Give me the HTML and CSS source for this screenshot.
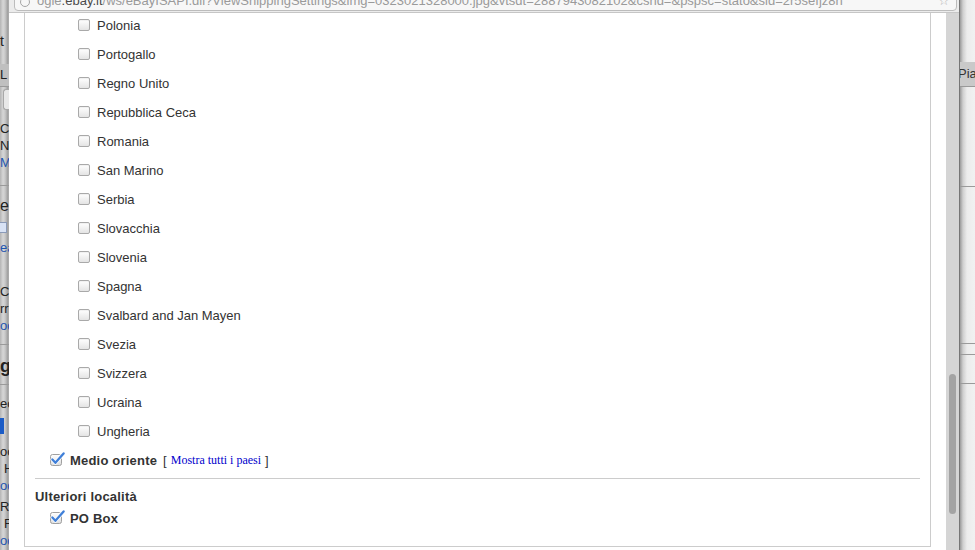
FILE: index.html
```html
<!DOCTYPE html>
<html lang="it">
<head>
<meta charset="utf-8">
<title>Impostazioni di spedizione</title>
<link rel="stylesheet" href="styles.css">
</head>
<body>
<div class="desk">
	<div class="behind behind-l">
		<p class="frag frag-t">t</p>
		<p class="frag tab-l">L</p>
		<div class="fake-input"></div>
		<p class="frag mt10">C</p>
		<p class="frag">N</p>
		<p class="frag link">M</p>
		<hr class="rule mt14">
		<p class="frag big mt10">es</p>
		<span class="chk-mini"></span>
		<p class="frag link mt6">ea</p>
		<p class="frag mt27">C</p>
		<p class="frag">rr</p>
		<p class="frag link">od</p>
		<hr class="rule mt10">
		<p class="frag head">g</p>
		<hr class="rule mt5">
		<p class="frag mt10">ec</p>
		<div class="btn-blue"></div>
		<p class="frag mt9">oc</p>
		<p class="frag indent">H</p>
		<p class="frag link">od</p>
		<p class="frag mt4">Re</p>
		<p class="frag indent">F</p>
		<p class="frag link">od</p>
	</div>

	<div class="popup">
		<div class="urlbar">
			<div class="urlbox">
				<span class="site-ico"></span>
				<span class="url">ogle<b>.ebay.it</b>/ws/eBayISAPI.dll?ViewShippingSettings&amp;img=0323021328000.jpg&amp;vtsdt=2887943082102&amp;cshd=&amp;pspsc=stato&amp;sid=2r5sefjz8h</span>
				<span class="star">☆</span>
			</div>
		</div>
		<div class="pbody">
			<div class="viewport">
				<div class="box">
					<ul class="countries">
						<li><input type="checkbox" class="cb"><span>Polonia</span></li>
						<li><input type="checkbox" class="cb"><span>Portogallo</span></li>
						<li><input type="checkbox" class="cb"><span>Regno Unito</span></li>
						<li><input type="checkbox" class="cb"><span>Repubblica Ceca</span></li>
						<li><input type="checkbox" class="cb"><span>Romania</span></li>
						<li><input type="checkbox" class="cb"><span>San Marino</span></li>
						<li><input type="checkbox" class="cb"><span>Serbia</span></li>
						<li><input type="checkbox" class="cb"><span>Slovacchia</span></li>
						<li><input type="checkbox" class="cb"><span>Slovenia</span></li>
						<li><input type="checkbox" class="cb"><span>Spagna</span></li>
						<li><input type="checkbox" class="cb"><span>Svalbard and Jan Mayen</span></li>
						<li><input type="checkbox" class="cb"><span>Svezia</span></li>
						<li><input type="checkbox" class="cb"><span>Svizzera</span></li>
						<li><input type="checkbox" class="cb"><span>Ucraina</span></li>
						<li><input type="checkbox" class="cb"><span>Ungheria</span></li>
					</ul>
					<div class="region">
						<svg class="tick" viewBox="0 0 15 14" width="15" height="14">
							<defs>
								<linearGradient id="tg1" x1="0" y1="0" x2="0" y2="1">
									<stop offset="0" stop-color="#ffffff"/>
									<stop offset="1" stop-color="#dcdcdc"/>
								</linearGradient>
							</defs>
							<rect x="0.5" y="2.5" width="11" height="11" rx="2" fill="url(#tg1)" stroke="#a0a0a0"/>
							<path d="M2.4 7.4 L5.4 10.8 L13.6 1.4" fill="none" stroke="#fff" stroke-width="3.8" stroke-linecap="round" stroke-linejoin="round"/>
							<path d="M2.4 7.4 L5.4 10.8 L13.6 1.4" fill="none" stroke="#3f7fd8" stroke-width="2.3" stroke-linecap="round" stroke-linejoin="round"/>
						</svg>
						<span>Medio oriente</span>
						<span class="bracket">[</span><a class="more" href="#">Mostra tutti i paesi</a><span class="bracket bracket-r">]</span>
					</div>
					<hr class="sep">
					<div class="group">Ulteriori località</div>
					<div class="region po">
						<svg class="tick" viewBox="0 0 15 14" width="15" height="14">
							<defs>
								<linearGradient id="tg2" x1="0" y1="0" x2="0" y2="1">
									<stop offset="0" stop-color="#ffffff"/>
									<stop offset="1" stop-color="#dcdcdc"/>
								</linearGradient>
							</defs>
							<rect x="0.5" y="2.5" width="11" height="11" rx="2" fill="url(#tg2)" stroke="#a0a0a0"/>
							<path d="M2.4 7.4 L5.4 10.8 L13.6 1.4" fill="none" stroke="#fff" stroke-width="3.8" stroke-linecap="round" stroke-linejoin="round"/>
							<path d="M2.4 7.4 L5.4 10.8 L13.6 1.4" fill="none" stroke="#3f7fd8" stroke-width="2.3" stroke-linecap="round" stroke-linejoin="round"/>
						</svg>
						<span>PO Box</span>
					</div>
				</div>
			</div>
			<div class="vscroll"><div class="thumb"></div></div>
		</div>
	</div>

	<div class="behind behind-r">
		<p class="tab-r">Pia</p>
		<hr class="rule mt99">
		<hr class="rule mt156">
		<hr class="rule mt10">
		<hr class="rule mt28">
	</div>
</div>
</body>
</html>
```

FILE: styles.css
```css
*{ padding:0; margin:0; box-sizing:content-box;}
body{ background:#ddd; font-family:"Liberation Sans", Arial, sans-serif; overflow:hidden;}
.desk{ display:flex; height:550px; overflow:hidden;}

/* page behind the popup */
.behind{ flex:none; overflow:hidden; white-space:nowrap; font-size:13px; color:#222;}
.behind-l{ width:9px; background:linear-gradient(to right, #b4b4b4 0, #d6d6d6 3px, #c9c9c9 5px, #9c9c9c 8px, #b8b8b8 9px);}
.behind-r{ width:15px; border-left:1px solid #767676; background:linear-gradient(to right, #9a9a9a 0, #cfcfcf 3px, #ececec 7px, #f1f1f1 15px);}
.frag{ line-height:17px; height:17px;}
.frag-t{ margin-top:32px; font-size:14px; line-height:18px; height:18px;}
.tab-l{ margin-top:14px; height:22px; line-height:22px; background:#bfbfbf; border-bottom:1px solid #999;}
.fake-input{ margin:2px 0 0 3px; height:19px; border:1px solid #a8a8a8; border-right:0; border-radius:3px 0 0 3px; background:#e8e8e8;}
.link{ color:#1f55b0;}
.big{ font-size:16px; line-height:20px; height:20px;}
.head{ margin-top:8px; font-size:18px; font-weight:bold; line-height:26px; height:26px;}
.indent{ text-indent:4px;}
.chk-mini{ display:block; margin-top:6px; width:6px; height:9px; border:1px solid #8a9ab8; border-left:0; background:#d8e2f4;}
.btn-blue{ margin-top:6px; width:4px; height:16px; background:#1b5cc6;}
.rule{ border:0; border-top:1px solid #9a9a9a; height:0;}
.mt4{ margin-top:4px;}
.mt5{ margin-top:5px;}
.mt6{ margin-top:6px;}
.mt9{ margin-top:9px;}
.mt10{ margin-top:10px;}
.mt14{ margin-top:14px;}
.mt27{ margin-top:27px;}
.mt28{ margin-top:28px;}
.mt99{ margin-top:99px;}
.mt156{ margin-top:156px;}
.tab-r{ margin-top:62px; height:24px; line-height:24px; text-indent:-2px; background:#c9c9c9; border-bottom:1px solid #999; color:#333;}

/* popup window */
.popup{ width:950px; flex:none; display:flex; flex-direction:column; background:#fff;}
.urlbar{ height:12px; flex:none; border-bottom:1px solid #c6c6c6; background:#ececec; overflow:hidden;}
.urlbox{ display:flex; align-items:center; margin:-12px 2px 0 5px; height:20px; padding:1px 6px 0 5px; border:1px solid #bcbcbc; border-radius:0 0 4px 4px; background:#f7f7f7; font-size:13px; line-height:19px; color:#9a9a9a; white-space:nowrap; overflow:hidden;}
.site-ico{ flex:none; width:8px; height:8px; margin:3px 7px 0 0; border:1px solid #a5a5a5; border-radius:50%;}
.url{ flex:1; overflow:hidden;}
.url b{ font-weight:normal; color:#4a4a4a;}
.star{ flex:none; margin-left:12px; color:#b0b0b0; font-size:13px;}

.pbody{ flex:1; display:flex; min-height:0;}
.viewport{ flex:1; overflow:hidden;}
.vscroll{ width:13px; flex:none; background:#d5d5d5;}
.thumb{ margin:361px 0 0 3px; width:7px; height:140px; border-radius:4px; background:#a3a3a3;}

.box{ margin:-3px 15px 0; border:1px solid #ccc; padding:0 10px 17px; color:#333;}
.countries{ list-style:none; padding-left:43px;}
.countries li{ height:29px; display:flex; align-items:center; font-size:13px;}
.cb{ appearance:none; -webkit-appearance:none; flex:none; width:10px; height:10px; margin:0 7px 1px 0; border:1px solid #a9a9a9; border-radius:2px; background:linear-gradient(#ffffff, #e4e4e4); box-shadow:inset 0 1px 1px rgba(0,0,0,0.06);}

.region{ height:29px; display:flex; align-items:center; padding-left:15px; font-size:13px; font-weight:bold; letter-spacing:0.2px;}
.region .tick{ flex:none; margin:0 5px 3px 0;}
.bracket{ font-weight:normal; letter-spacing:0; margin-left:6px;}
.bracket-r{ margin-left:4px;}
.more{ font-family:"Liberation Serif", "Times New Roman", serif; font-size:12px; font-weight:normal; letter-spacing:0; color:#0000cc; text-decoration:none; margin-left:4px;}
.sep{ border:0; border-top:1px solid #ccc; height:0; margin-top:3px;}
.group{ margin-top:9px; font-size:13px; font-weight:bold; letter-spacing:0.2px; line-height:17px;}
.region.po{ height:22px; margin-top:2px;}
```
